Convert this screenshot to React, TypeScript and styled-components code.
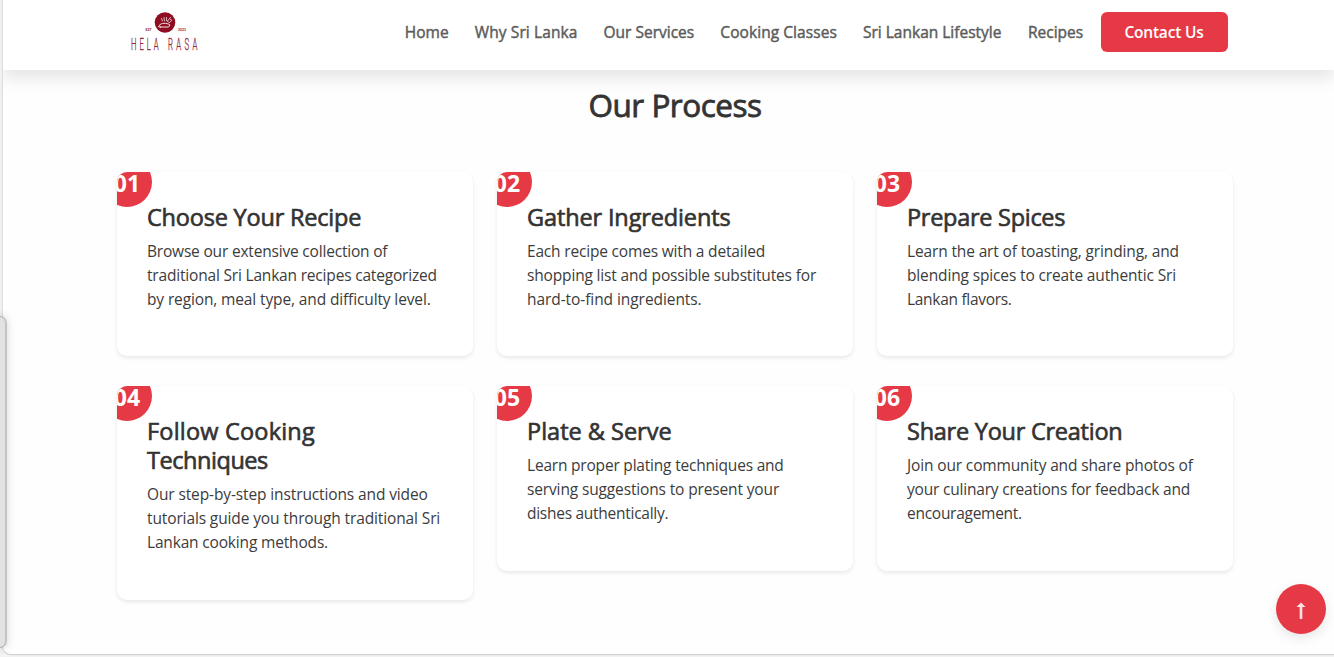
import React from "react";
import styled, { createGlobalStyle } from "styled-components";

const GlobalStyle = createGlobalStyle`
  *, *::before, *::after { box-sizing: border-box; }
  body {
    margin: 0;
    background: #f3f3f3;
    color: #333;
    font-family: "Segoe UI", "Open Sans", "Noto Sans", sans-serif;
    font-size: 16px;
    line-height: 1.5;
    overflow: hidden;
  }
  h2, h3, p { margin: 0; }
`;

const Window = styled.div`
  height: 657px;
  padding: 0 0 2px 2px;
  overflow: hidden;
  position: relative;
`;

const Page = styled.div`
  height: 655px;
  background: #fefefe;
  border: 1px solid #cfcfcf;
  border-left-color: #e0e0e0;
  border-width: 0 0 1px 1px;
  border-radius: 0 0 0 9px;
  box-shadow: 0 0 2px rgba(0, 0, 0, 0.1);
`;

const Header = styled.header`
  height: 70px;
  padding: 12px 106px 0 114px;
  display: flex;
  align-items: flex-start;
  justify-content: space-between;
  background: #fff;
  box-shadow: 0 8px 16px rgba(0, 0, 0, 0.1);
  clip-path: inset(0 0 -40px 0);
`;

const Logo = styled.svg`
  display: block;
  width: 96px;
  height: 42px;
`;

const Nav = styled.nav`
  display: flex;
  align-items: center;
  height: 40px;
`;

const NavLink = styled.a<{ $w: number; $ls: number }>`
  width: ${(p) => p.$w}px;
  padding-top: 2px;
  letter-spacing: ${(p) => p.$ls}px;
  font-weight: 400;
  -webkit-text-stroke: 0.45px currentColor;
  font-size: 15.5px;
  color: #5c5c5c;
  white-space: nowrap;
`;

const Contact = styled.button`
  width: 127px;
  height: 40px;
  padding: 0 1px 0 0;
  border: 0;
  border-radius: 6px;
  background: #e63946;
  color: #fff;
  font: 600 15.5px "Segoe UI", "Open Sans", "Noto Sans", sans-serif;
  letter-spacing: -0.2px;
`;

const Section = styled.section`
  width: 1140px;
  margin-left: 102px;
  padding: 16px 12px 0;
`;

const Heading = styled.h2`
  font-size: 31.5px;
  line-height: 38px;
  font-weight: 400;
  -webkit-text-stroke: 0.8px currentColor;
  text-align: center;
  white-space: nowrap;
  letter-spacing: -0.5px;
`;

const Grid = styled.div`
  display: grid;
  grid-template-columns: repeat(3, 356px);
  column-gap: 24px;
  row-gap: 29.6px;
  align-items: start;
  margin-top: 47.6px;
`;

const Card = styled.article`
  position: relative;
  overflow: hidden;
  padding: 31.4px 30px 45.4px;
  border-radius: 10px;
  background: #fff;
  box-shadow: 0 2px 4px rgba(0, 0, 0, 0.09);
`;

const Badge = styled.span`
  position: absolute;
  top: -15px;
  left: -15px;
  width: 50px;
  height: 50px;
  padding-top: 3px;
  border-radius: 50%;
  background: #e63946;
  color: #fff;
  display: flex;
  align-items: center;
  justify-content: center;
  font-size: 23px;
  font-weight: 700;
  line-height: 1;
`;

const Title = styled.h3`
  font-size: 23.5px;
  line-height: 28.8px;
  font-weight: 400;
  -webkit-text-stroke: 0.65px currentColor;
  margin-bottom: 7.2px;
`;

const Line = styled.span<{ $ls: number }>`
  display: block;
  white-space: nowrap;
  letter-spacing: ${(p) => p.$ls}px;
`;

const Body = styled.p`
  font-size: 15.5px;
  line-height: 24px;
  color: #3c3c3c;
`;

const ToTop = styled.button`
  position: absolute;
  right: 8px;
  bottom: 23px;
  width: 50px;
  height: 50px;
  padding: 0;
  border: 0;
  border-radius: 50%;
  background: #e63946;
  box-shadow: 0 4px 12px rgba(0, 0, 0, 0.1);
  svg { display: block; }
`;

const SideHandle = styled.div`
  position: absolute;
  left: -4px;
  top: 316px;
  width: 11px;
  height: 332px;
  border: 1px solid #b4b4b4;
  border-right: 2px solid #c3c3c3;
  border-radius: 0 7px 7px 0;
  background: #e2e2e2;
  box-shadow: 0 0 8px rgba(0, 0, 0, 0.16);
`;

type TextLine = [string, number];
interface Step { no: string; title: TextLine[]; body: TextLine[] }

const links: [string, number, number][] = [
  ["Home", 70, 0],
  ["Why Sri Lanka", 128.7, 0.1],
  ["Our Services", 116.8, 0],
  ["Cooking Classes", 142.7, 0.07],
  ["Sri Lankan Lifestyle", 165, 0],
  ["Recipes", 73, 0],
];

const steps: Step[] = [
  { no: "01", title: [["Choose Your Recipe", -0.2]], body: [["Browse our extensive collection of", -0.19], ["traditional Sri Lankan recipes categorized", -0.185], ["by region, meal type, and difficulty level.", -0.13]] },
  { no: "02", title: [["Gather Ingredients", -0.13]], body: [["Each recipe comes with a detailed", -0.18], ["shopping list and possible substitutes for", -0.16], ["hard-to-find ingredients.", -0.07]] },
  { no: "03", title: [["Prepare Spices", -0.28]], body: [["Learn the art of toasting, grinding, and", -0.14], ["blending spices to create authentic Sri", -0.14], ["Lankan flavors.", -0.3]] },
  { no: "04", title: [["Follow Cooking", 0.2], ["Techniques", -0.45]], body: [["Our step-by-step instructions and video", -0.12], ["tutorials guide you through traditional Sri", -0.12], ["Lankan cooking methods.", -0.17]] },
  { no: "05", title: [["Plate & Serve", 0]], body: [["Learn proper plating techniques and", -0.2], ["serving suggestions to present your", -0.14], ["dishes authentically.", -0.27]] },
  { no: "06", title: [["Share Your Creation", -0.25]], body: [["Join our community and share photos of", -0.14], ["your culinary creations for feedback and", -0.2], ["encouragement.", -0.27]] },
];

const Lines = ({ items }: { items: TextLine[] }) => (
  <>{items.map(([text, ls]) => <Line key={text} $ls={ls}>{text}</Line>)}</>
);

const BrandLogo = () => (
  <Logo viewBox="0 0 96 42" aria-label="Hela Rasa">
    <circle cx="48" cy="10.5" r="10.3" fill="#8f0d20" />
    <g fill="none" stroke="#f3dfe2" strokeWidth="1" strokeLinecap="round">
      <path d="M42.500 13c1.500-2 7-2.500 10.500 0l-1.500 2h-7.500zM41.500 14.500l2 1" />
      <path strokeWidth=".8" d="M44.500 6.500l1 2.500M47 5.500l.5 3.500M49.500 5.500v3l2 1.500M50.500 9l3-3.500M52 11l2.500-2.500M53 7l1.500 1" />
    </g>
    <g fill="#96283a" fontFamily="Roboto, sans-serif">
      <text x="28.500" y="18.500" fontSize="3.300" fontWeight="700" textLength="6">EST</text>
      <text x="61" y="18.500" fontSize="3.300" fontWeight="700" textLength="8">2023</text>
      <g stroke="#96283a" strokeWidth=".35">
        <text transform="translate(14 37.600) scale(.46 1)" fontSize="16.800" fontWeight="300" textLength="60">HELA</text>
        <text transform="translate(51 37.600) scale(.46 1)" fontSize="16.800" fontWeight="300" textLength="64">RASA</text>
      </g>
    </g>
  </Logo>
);

export default function App() {
  return (
    <Window>
      <GlobalStyle />
      <Page>
        <Header>
          <BrandLogo />
          <Nav>
            {links.map(([label, w, ls]) => <NavLink key={label} $w={w} $ls={ls}>{label}</NavLink>)}
            <Contact>Contact Us</Contact>
          </Nav>
        </Header>
        <Section>
          <Heading>Our Process</Heading>
          <Grid>
            {steps.map((s) => (
              <Card key={s.no}>
                <Badge>{s.no}</Badge>
                <Title><Lines items={s.title} /></Title>
                <Body><Lines items={s.body} /></Body>
              </Card>
            ))}
          </Grid>
        </Section>
      </Page>
      <SideHandle />
      <ToTop aria-label="Back to top">
        <svg width="50" height="50" viewBox="0 0 50 50" fill="#fbe3e5">
          <path d="M25 18.500l4.500 4.500h-3.200v12h-2.600V23h-3.200z" />
        </svg>
      </ToTop>
    </Window>
  );
}
